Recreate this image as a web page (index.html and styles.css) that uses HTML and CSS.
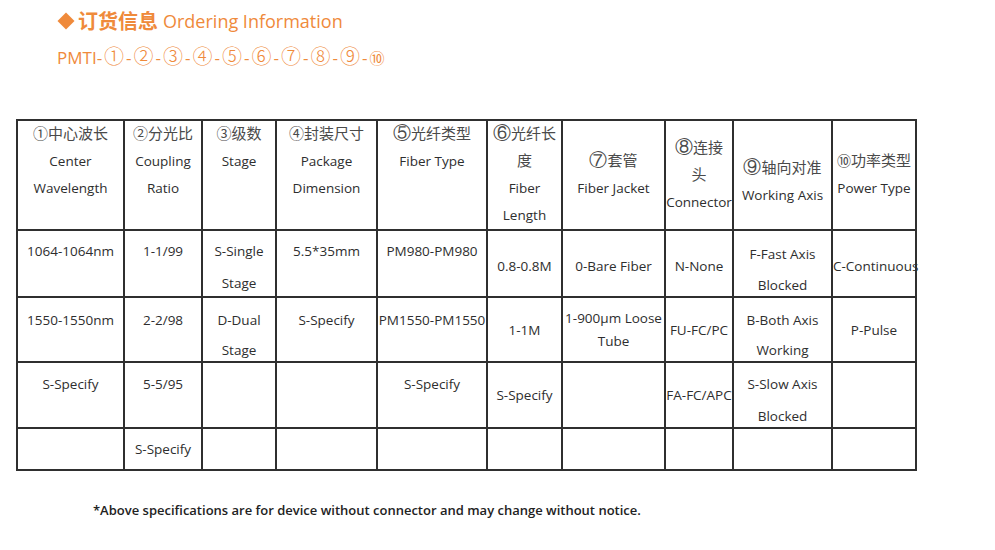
FILE: index.html
```html
<!DOCTYPE html>
<html lang="zh">
<head>
<meta charset="utf-8">
<title>Ordering Information</title>
<link rel="stylesheet" href="styles.css">
</head>
<body>
<div class="page">
  <h2 class="title"><span class="diamond"></span><span class="cn">订货信息</span><span class="en">Ordering Information</span></h2>
  <p class="code">PMTI-<span class="c">①</span>-<span class="c">②</span>-<span class="c">③</span>-<span class="c">④</span>-<span class="c">⑤</span>-<span class="c">⑥</span>-<span class="c">⑦</span>-<span class="c">⑧</span>-<span class="c">⑨</span>-<span class="c ten">⑩</span></p>

  <table class="spec">
    <colgroup>
      <col class="w1"><col class="w2"><col class="w3"><col class="w4"><col class="w5">
      <col class="w6"><col class="w7"><col class="w8"><col class="w9"><col class="w10">
    </colgroup>
    <tr class="head">
      <th class="top"><span class="zh">①中心波长</span><br>Center<br>Wavelength</th>
      <th class="top"><span class="zh">②分光比</span><br>Coupling<br>Ratio</th>
      <th class="top"><span class="zh">③级数</span><br>Stage</th>
      <th class="top"><span class="zh">④封装尺寸</span><br>Package<br>Dimension</th>
      <th class="top"><span class="zh"><span class="big">⑤</span>光纤类型</span><br>Fiber Type</th>
      <th class="top"><span class="zh"><span class="big">⑥</span>光纤长</span><br><span class="zh">度</span><br>Fiber<br>Length</th>
      <th><span class="zh"><span class="big">⑦</span>套管</span><br>Fiber Jacket</th>
      <th><span class="zh"><span class="big">⑧</span>连接</span><br><span class="zh">头</span><br>Connector</th>
      <th class="nine"><span class="zh"><span class="big">⑨</span>轴向对准</span><br>Working Axis</th>
      <th><span class="zh"><span class="ten-h">⑩</span>功率类型</span><br>Power Type</th>
    </tr>
    <tr class="r1">
      <td class="top">1064-1064nm</td>
      <td class="top">1-1/99</td>
      <td class="top">S-Single<span class="l2 g16">Stage</span></td>
      <td class="top">5.5*35mm</td>
      <td class="top">PM980-PM980</td>
      <td class="mid">0.8-0.8M</td>
      <td class="mid">0-Bare Fiber</td>
      <td class="mid">N-None</td>
      <td class="top low">F-Fast Axis<span class="l2 g15">Blocked</span></td>
      <td class="mid">C-Continuous</td>
    </tr>
    <tr class="r2">
      <td class="top">1550-1550nm</td>
      <td class="top">2-2/98</td>
      <td class="top">D-Dual<span class="l2 g14">Stage</span></td>
      <td class="top">S-Specify</td>
      <td class="top">PM1550-PM1550</td>
      <td>1-1M</td>
      <td>1-900µm Loose<span class="l2 g7">Tube</span></td>
      <td>FU-FC/PC</td>
      <td class="top">B-Both Axis<span class="l2 g14">Working</span></td>
      <td>P-Pulse</td>
    </tr>
    <tr class="r3">
      <td class="top">S-Specify</td>
      <td class="top">5-5/95</td>
      <td></td>
      <td></td>
      <td class="top">S-Specify</td>
      <td>S-Specify</td>
      <td></td>
      <td>FA-FC/APC</td>
      <td class="top">S-Slow Axis<span class="l2 g16">Blocked</span></td>
      <td></td>
    </tr>
    <tr class="r4">
      <td></td>
      <td>S-Specify</td>
      <td></td>
      <td></td>
      <td></td>
      <td></td>
      <td></td>
      <td></td>
      <td></td>
      <td></td>
    </tr>
  </table>

  <p class="note">*Above specifications are for device without connector and may change without notice.</p>
</div>
</body>
</html>
```

FILE: styles.css
```css
html, body {
  margin: 0;
  padding: 0;
  background: #ffffff;
}

.page {
  font-family: "Open Sans", "Noto Sans CJK SC", sans-serif;
  color: #333;
  padding-top: 7px;
}

.title {
  margin: 0 0 0 57px;
  height: 28px;
  line-height: 28px;
  color: #ef8a3b;
  font-weight: normal;
  display: flex;
  align-items: center;
  white-space: nowrap;
}

.title .diamond {
  display: inline-block;
  width: 12px;
  height: 12px;
  background: #ef8a3b;
  transform: rotate(45deg);
  margin: 0 6px 0 3px;
}

.title .cn {
  font-family: "Noto Sans CJK SC", sans-serif;
  font-size: 20px;
  font-weight: 700;
  margin-right: 5px;
}

.title .en {
  font-family: "Open Sans", sans-serif;
  font-size: 18px;
}

.code {
  margin: 9px 0 0 57px;
  height: 28px;
  line-height: 28px;
  color: #ef8a3b;
  font-size: 17px;
  font-family: "Open Sans", sans-serif;
  white-space: nowrap;
}

.code .c {
  font-family: "Noto Sans CJK SC", sans-serif;
  font-size: 20px;
  font-weight: 300;
  line-height: 1;
  margin: 0 2px;
}

.code .ten {
  font-size: 15px;
  font-weight: 400;
}

.spec {
  margin: 47px 0 0 16px;
  border-collapse: collapse;
  table-layout: fixed;
  width: 901px;
  border: 2px solid #2f2f2f;
  font-size: 13.5px;
  color: #2e2e2e;
}

.w1 { width: 107px; }
.w2 { width: 78px; }
.w3 { width: 74px; }
.w4 { width: 101px; }
.w5 { width: 110px; }
.w6 { width: 75px; }
.w7 { width: 103px; }
.w8 { width: 68px; }
.w9 { width: 99px; }
.w10 { width: 84px; }

.spec th,
.spec td {
  border: 2px solid #2f2f2f;
  padding: 0;
  text-align: center;
  vertical-align: middle;
  white-space: nowrap;
  overflow: visible;
  font-weight: normal;
}

.spec th {
  line-height: 27px;
}

.spec .zh {
  font-family: "Noto Sans CJK SC", sans-serif;
  font-size: 15px;
  line-height: 1;
  color: #4a4a4a;
}

.spec .big {
  font-family: "DejaVu Sans", sans-serif;
  font-size: 18px;
  font-weight: 300;
  line-height: 1;
}

.spec .ten-h {
  font-size: 14px;
}

.spec th.top {
  vertical-align: top;
}

.spec th.nine {
  padding-top: 13px;
}

.head { height: 110px; }
.r1 { height: 67px; }
.r2 { height: 65px; }
.r3 { height: 66px; }
.r4 { height: 42px; }

.spec td {
  line-height: 16px;
}

.spec td.top {
  vertical-align: top;
}

.spec .l2 {
  display: block;
}

.g7 { margin-top: 7px; }
.g14 { margin-top: 14px; }
.g15 { margin-top: 15px; }
.g16 { margin-top: 16px; }

.r1 td.top { padding-top: 12px; }
.r1 td.low { padding-top: 15px; }
.r1 td.mid { padding-top: 5px; }
.r2 td.top { padding-top: 14px; }
.r3 td.top { padding-top: 13px; }

.note {
  margin: 30px 0 0 93px;
  font-size: 13px;
  font-weight: 600;
  color: #222;
  white-space: nowrap;
}
```
